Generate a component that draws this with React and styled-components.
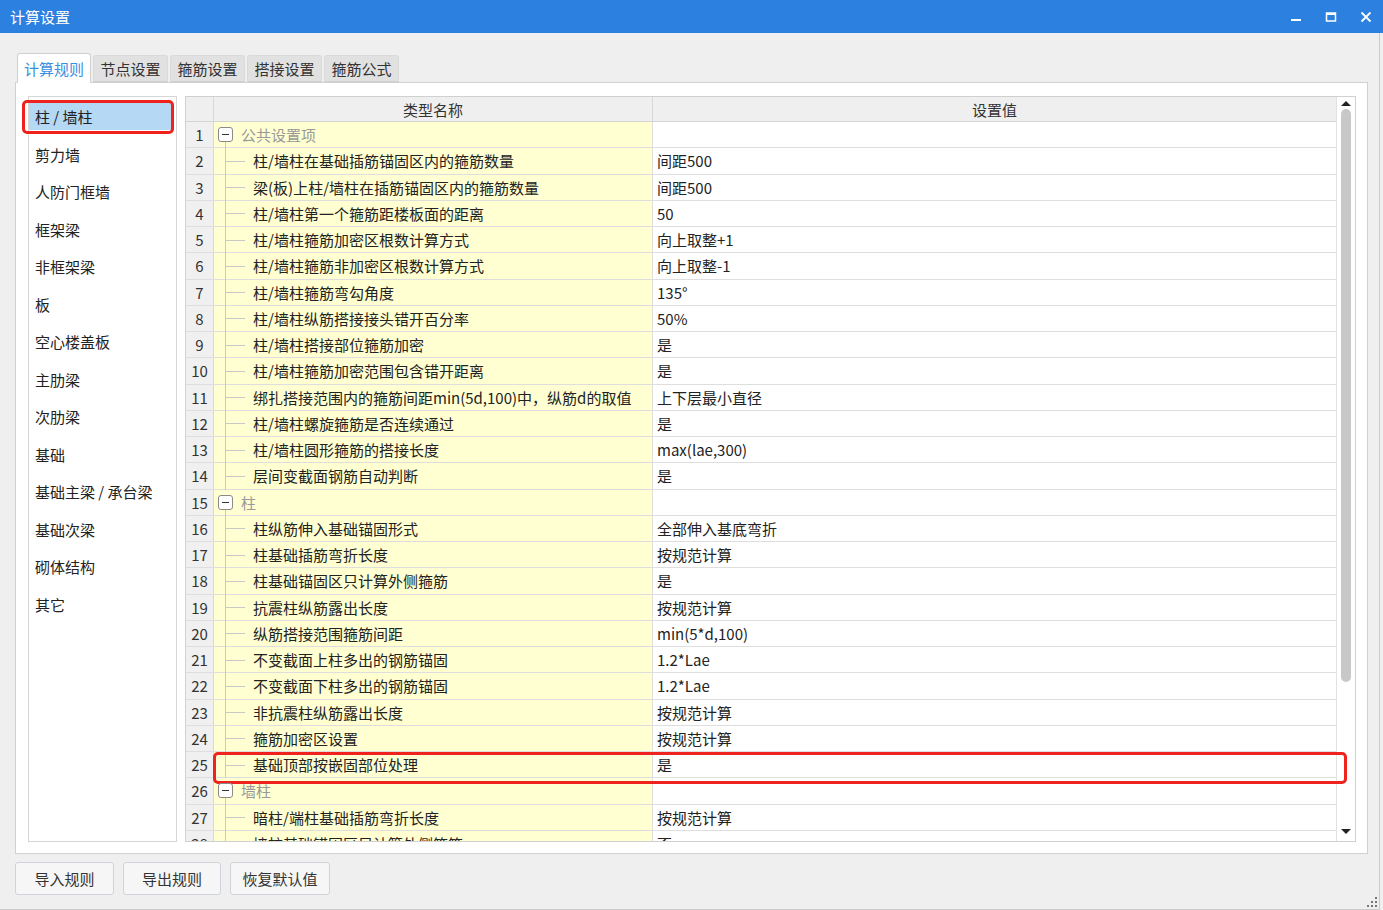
import React from 'react';
import styled, { createGlobalStyle } from 'styled-components';

const GlobalStyle = createGlobalStyle`
  html, body {
    margin: 0;
    padding: 0;
    background: #efefef;
  }
  body {
    font-family: 'Noto Sans CJK SC', 'Noto Sans', sans-serif;
    color: #333;
  }
`;

const Window = styled.div`
  width: 1383px;
  height: 910px;
  display: flex;
  flex-direction: column;
  overflow: hidden;
`;

const TitleBar = styled.div`
  height: 33px;
  background: #2c80df;
  display: flex;
  align-items: center;
  padding-left: 10px;
  color: #fff;
  font-size: 15px;
`;

const Title = styled.span`
  flex: 1;
`;

const TitleBtn = styled.div`
  width: 35px;
  height: 33px;
  display: flex;
  align-items: center;
  justify-content: center;
  svg {
    stroke: #fff;
    fill: none;
  }
`;

const Body = styled.div`
  flex: 1;
  width: 1380px;
  box-sizing: border-box;
  border-right: 1px solid #cbcbcb;
  border-bottom: 1px solid #cbcbcb;
  padding: 20px 0 0 15px;
  display: flex;
  flex-direction: column;
  position: relative;
`;

const Tabs = styled.div`
  display: flex;
  align-items: flex-end;
  gap: 2px;
  padding-left: 2px;
  height: 29px;
  position: relative;
  z-index: 1;
`;

const Tab = styled.div`
  box-sizing: border-box;
  width: ${p => (p.active ? 74 : 75)}px;
  height: ${p => (p.active ? 30 : 27)}px;
  display: flex;
  align-items: center;
  justify-content: center;
  font-size: 15px;
  background: ${p => (p.active ? '#fff' : '#e1e1e1')};
  color: ${p => (p.active ? '#3b8fe2' : '#333')};
  border: 1px solid ${p => (p.active ? '#d0d0d0' : '#dadada')};
  border-bottom: ${p => (p.active ? '1px solid #fff' : '1px solid #d0d0d0')};
  border-radius: 3px 3px 0 0;
  margin-bottom: ${p => (p.active ? -1 : 0)}px;
`;

const Panel = styled.div`
  width: 1353px;
  height: 772px;
  box-sizing: border-box;
  background: #fff;
  border: 1px solid #d0d0d0;
  padding: 13px 11px 11px 12px;
  display: flex;
  gap: 8px;
`;

const List = styled.div`
  width: 149px;
  box-sizing: border-box;
  border: 1px solid #d6d6d6;
  padding: 6px 4px 0 0;
  display: flex;
  flex-direction: column;
  gap: 10.5px;
  position: relative;
`;

const ListItem = styled.div`
  height: 27px;
  display: flex;
  align-items: center;
  padding-left: 6px;
  font-size: 15px;
  color: #222;
  white-space: nowrap;
  background: ${p => (p.selected ? '#b5d8f4' : 'transparent')};
`;

const RedMark = styled.div`
  position: absolute;
  border: 3px solid #f0221d;
  border-radius: 5px;
  pointer-events: none;
  box-sizing: border-box;
`;

const Grid = styled.div`
  flex: 1;
  box-sizing: border-box;
  border: 1px solid #d0d0d0;
  display: flex;
  position: relative;
  overflow: hidden;
`;

const Table = styled.div`
  flex: 1;
  display: flex;
  flex-direction: column;
  overflow: hidden;
`;

const Row = styled.div`
  display: grid;
  grid-template-columns: 28px 439px 1fr;
  height: ${p => (p.header ? 25 : 26.25)}px;
  flex-shrink: 0;
  box-sizing: border-box;
  border-bottom: 1px solid ${p => (p.header ? '#d4d4d4' : '#dedede')};
  font-size: 15px;
`;

const NumCell = styled.div`
  background: #f0f0f0;
  border-right: 1px solid #d8d8d8;
  display: flex;
  align-items: center;
  justify-content: center;
  color: #333;
  font-size: 15px;
`;

const HeadCell = styled.div`
  background: #efefef;
  border-right: ${p => (p.last ? 'none' : '1px solid #d8d8d8')};
  display: flex;
  align-items: center;
  justify-content: center;
  color: #333;
`;

const NameCell = styled.div`
  background: #ffffd1;
  border-right: 1px solid #dedede;
  display: flex;
  align-items: center;
  position: relative;
  padding-left: ${p => (p.group ? 4 : 39)}px;
  color: ${p => (p.group ? '#999' : '#222')};
  white-space: nowrap;

  &::before {
    content: '';
    position: absolute;
    left: 11px;
    top: ${p => (p.group ? '19px' : '0')};
    bottom: -1px;
    border-left: 1px solid #c9c9c9;
  }
  &::after {
    content: '';
    display: ${p => (p.group ? 'none' : 'block')};
    position: absolute;
    left: 12px;
    width: 19px;
    top: 50%;
    border-top: 1px solid #c9c9c9;
  }
`;

const Toggle = styled.span`
  width: 15px;
  height: 15px;
  box-sizing: border-box;
  border: 1px solid #8a8a8a;
  border-radius: 3px;
  background: #fff;
  margin-right: 8px;
  display: flex;
  align-items: center;
  justify-content: center;
  position: relative;
  z-index: 1;
  &::after {
    content: '';
    width: 7px;
    border-top: 1px solid #333;
  }
`;

const ValueCell = styled.div`
  display: flex;
  align-items: center;
  padding-left: 4px;
  color: #222;
  white-space: nowrap;
`;

const ScrollBar = styled.div`
  width: 19px;
  border-left: 1px solid #e2e2e2;
  display: flex;
  flex-direction: column;
  align-items: center;
  padding-top: 2px;
  box-sizing: border-box;
`;

const Arrow = styled.div`
  width: 0;
  height: 0;
  border-left: 5px solid transparent;
  border-right: 5px solid transparent;
  ${p => (p.down ? 'border-top: 5px solid #222;' : 'border-bottom: 5px solid #222;')}
  margin: ${p => (p.down ? '0 0 7px' : '2px 0 3px')};
`;

const Thumb = styled.div`
  width: 10px;
  height: 573px;
  border-radius: 5px;
  background: #c8c8c8;
`;

const Track = styled.div`
  flex: 1;
`;

const Buttons = styled.div`
  display: flex;
  gap: 9px;
  margin-top: 8px;
`;

const Button = styled.div`
  width: ${p => p.w}px;
  height: 33px;
  box-sizing: border-box;
  border: 1px solid #cfd3da;
  border-radius: 3px;
  background: #f6f6f6;
  display: flex;
  align-items: center;
  justify-content: center;
  font-size: 15px;
  color: #333;
`;

const Grip = styled.svg`
  position: absolute;
  right: 2px;
  bottom: 2px;
`;

const sideItems = [
  '柱 / 墙柱', '剪力墙', '人防门框墙', '框架梁', '非框架梁', '板', '空心楼盖板',
  '主肋梁', '次肋梁', '基础', '基础主梁 / 承台梁', '基础次梁', '砌体结构', '其它'
];

const rows = [
  ['g', '公共设置项'],
  ['柱/墙柱在基础插筋锚固区内的箍筋数量', '间距500'],
  ['梁(板)上柱/墙柱在插筋锚固区内的箍筋数量', '间距500'],
  ['柱/墙柱第一个箍筋距楼板面的距离', '50'],
  ['柱/墙柱箍筋加密区根数计算方式', '向上取整+1'],
  ['柱/墙柱箍筋非加密区根数计算方式', '向上取整-1'],
  ['柱/墙柱箍筋弯勾角度', '135°'],
  ['柱/墙柱纵筋搭接接头错开百分率', '50%'],
  ['柱/墙柱搭接部位箍筋加密', '是'],
  ['柱/墙柱箍筋加密范围包含错开距离', '是'],
  ['绑扎搭接范围内的箍筋间距min(5d,100)中，纵筋d的取值', '上下层最小直径'],
  ['柱/墙柱螺旋箍筋是否连续通过', '是'],
  ['柱/墙柱圆形箍筋的搭接长度', 'max(lae,300)'],
  ['层间变截面钢筋自动判断', '是'],
  ['g', '柱'],
  ['柱纵筋伸入基础锚固形式', '全部伸入基底弯折'],
  ['柱基础插筋弯折长度', '按规范计算'],
  ['柱基础锚固区只计算外侧箍筋', '是'],
  ['抗震柱纵筋露出长度', '按规范计算'],
  ['纵筋搭接范围箍筋间距', 'min(5*d,100)'],
  ['不变截面上柱多出的钢筋锚固', '1.2*Lae'],
  ['不变截面下柱多出的钢筋锚固', '1.2*Lae'],
  ['非抗震柱纵筋露出长度', '按规范计算'],
  ['箍筋加密区设置', '按规范计算'],
  ['基础顶部按嵌固部位处理', '是'],
  ['g', '墙柱'],
  ['暗柱/端柱基础插筋弯折长度', '按规范计算'],
  ['墙柱基础锚固区只计算外侧箍筋', '否']
];

const tabs = ['计算规则', '节点设置', '箍筋设置', '搭接设置', '箍筋公式'];

export default function App() {
  return (
    <Window>
      <GlobalStyle />
      <TitleBar>
        <Title>计算设置</Title>
        <TitleBtn>
          <svg width="12" height="12" viewBox="0 0 12 12">
            <line x1="1" y1="9" x2="11" y2="9" strokeWidth="2" />
          </svg>
        </TitleBtn>
        <TitleBtn>
          <svg width="12" height="12" viewBox="0 0 12 12">
            <rect x="1.5" y="2" width="9" height="8" strokeWidth="1.5" />
            <line x1="1.5" y1="3" x2="10.5" y2="3" strokeWidth="2" />
          </svg>
        </TitleBtn>
        <TitleBtn>
          <svg width="12" height="12" viewBox="0 0 12 12">
            <path d="M1.5 1.5 L10.5 10.5 M10.5 1.5 L1.5 10.5" strokeWidth="1.8" />
          </svg>
        </TitleBtn>
      </TitleBar>
      <Body>
        <Tabs>
          {tabs.map((t, i) => (
            <Tab key={t} active={i === 0}>{t}</Tab>
          ))}
        </Tabs>
        <Panel>
          <List>
            {sideItems.map((s, i) => (
              <ListItem key={s} selected={i === 0}>{s}</ListItem>
            ))}
            <RedMark style={{ left: -7, top: 3, width: 152, height: 34 }} />
          </List>
          <Grid>
            <Table>
              <Row header>
                <HeadCell />
                <HeadCell>类型名称</HeadCell>
                <HeadCell last>设置值</HeadCell>
              </Row>
              {rows.map((r, i) => {
                const group = r[0] === 'g';
                return (
                  <Row key={i}>
                    <NumCell>{i + 1}</NumCell>
                    <NameCell group={group}>
                      {group && <Toggle />}
                      {group ? r[1] : r[0]}
                    </NameCell>
                    <ValueCell>{group ? '' : r[1]}</ValueCell>
                  </Row>
                );
              })}
            </Table>
            <ScrollBar>
              <Arrow />
              <Thumb />
              <Track />
              <Arrow down />
            </ScrollBar>
            <RedMark style={{ left: 27, top: 655, width: 1134, height: 32 }} />
          </Grid>
        </Panel>
        <Buttons>
          <Button w={99}>导入规则</Button>
          <Button w={98}>导出规则</Button>
          <Button w={100}>恢复默认值</Button>
        </Buttons>
        <Grip width="10" height="10" viewBox="0 0 10 10">
          <g fill="#777">
            <rect x="8" y="0" width="2" height="2" />
            <rect x="4" y="4" width="2" height="2" />
            <rect x="8" y="4" width="2" height="2" />
            <rect x="0" y="8" width="2" height="2" />
            <rect x="4" y="8" width="2" height="2" />
            <rect x="8" y="8" width="2" height="2" />
          </g>
        </Grip>
      </Body>
    </Window>
  );
}
